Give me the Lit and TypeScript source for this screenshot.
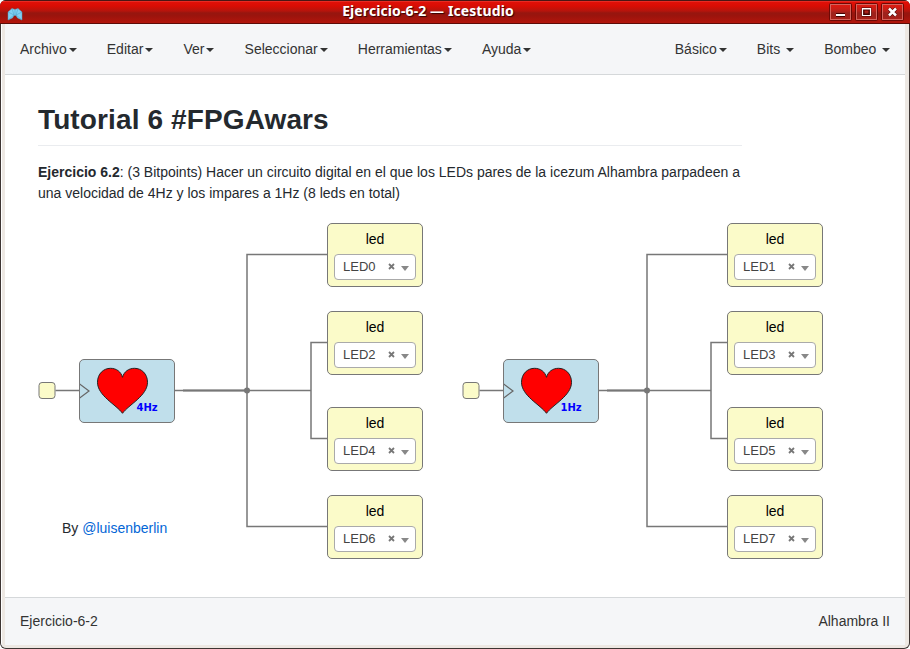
import { LitElement, html, css, svg } from "lit";
import { customElement, property } from "lit/decorators.js";

interface MenuItem { label: string; gap?: boolean }

const leftMenu: MenuItem[] = ["Archivo", "Editar", "Ver", "Seleccionar", "Herramientas", "Ayuda"].map((label) => ({ label }));
const rightMenu: MenuItem[] = [{ label: "Básico" }, { label: "Bits", gap: true }, { label: "Bombeo", gap: true }];

@customElement("title-bar")
class TitleBar extends LitElement {
  static styles = css`
    :host {
      display: flex; align-items: center; position: relative; height: 24px; box-sizing: border-box;
      border-top: 1px solid #4a1614; border-bottom: 1px solid #5c0c08; padding: 0 5px 0 7px;
      background: linear-gradient(#f0453c 0, #e01008 1px, #d80d04 5px, #b5140c 10px, #96160f 12px, #9c140d 15px, #b3150b 22px);
      font-family: "Noto Sans", sans-serif;
    }
    .logo { width: 16px; height: 14px; margin-top: 3px; }
    .title {
      flex: 1; text-align: center; color: #fff; font-weight: 700; font-size: 14px; line-height: 20px; letter-spacing: .1px;
      text-shadow: 1px 1px 1px #300; padding-left: 4px; white-space: nowrap; margin-top: -2px;
    }
    .dash { display: inline-block; width: 9px; height: 1.5px; margin: 0 1px; background: #fff; box-shadow: 1px 1px 1px #300; vertical-align: 4px; }
    .buttons { display: flex; gap: 3px; margin: -1px 1px 0 0; }
    .button { width: 23px; height: 18px; display: block; }
  `;
  private button(glyph: unknown) {
    return html`<svg class="button" viewBox="0 0 23 18">
      <rect x=".5" y=".5" width="22" height="17" rx="1" fill="none" stroke="#6d0905" />
      <rect x="1.5" y="1.5" width="20" height="15" fill="#fff" fill-opacity=".06" stroke="#d5645d" />
      ${glyph}
    </svg>`;
  }
  render() {
    return html`
      <svg class="logo" viewBox="0 0 16 14">
        <path d="M1 5L5 1.500l3 1 3-1L15 5v8l-4.500-2L9 8.500H7L5.500 11 1 13z" fill="#7fd0f3" stroke="#5a9dbb" stroke-width=".5" />
        <path d="M1 5l6 3L5 1.500M15 5L9 8l2-6.500M8 3v5M1 13l6-5M15 13L9 8" fill="none" stroke="#4a9fc4" stroke-width=".5" />
      </svg>
      <div class="title">Ejercicio-6-2 — Icestudio</div>
      <div class="buttons">
        ${this.button(svg`<path d="M7 10h9v4H7z" fill="#400"/><path d="M7 11h9v2H7z" fill="#fff"/>`)}
        ${this.button(svg`<path d="M8 6h7v6H8z" fill="none" stroke="#400" stroke-width="3"/><path d="M7.500 5.500h8v7h-8zM7.500 6h8" fill="none" stroke="#fff" stroke-width="1.200"/>`)}
        ${this.button(svg`<path d="M8 5.500l7 7M15 5.500l-7 7" stroke="#400" stroke-width="3.800"/><path d="M8 5.500l7 7M15 5.500l-7 7" stroke="#fff" stroke-width="2.600"/>`)}
      </div>`;
  }
}

@customElement("menu-bar")
class MenuBar extends LitElement {
  static styles = css`
    :host {
      display: flex; justify-content: space-between; height: 50px; background: #f5f6f8;
      border-bottom: 1px solid #d5d8da; color: #333; font-size: 14px; line-height: 20px;
    }
    .group { display: flex; }
    .item { display: flex; align-items: center; padding: 0 15px; white-space: pre; }
    .group:first-child .item { padding-right: 15.1px; }
    .group:last-child { margin-right: -.3px; }
    .caret { margin: 2px 0 0 2px; border: 4px solid transparent; border-top-color: #333; border-bottom: 0; }
    .gap { margin-left: 6px; }
  `;
  private item = (m: MenuItem) => html`<div class="item">${m.label}<span class="caret ${m.gap ? "gap" : ""}"></span></div>`;
  render() {
    return html`<div class="group">${leftMenu.map(this.item)}</div><div class="group">${rightMenu.map(this.item)}</div>`;
  }
}

@customElement("led-block")
class LedBlock extends LitElement {
  @property() name = "";
  static styles = css`
    :host {
      display: flex; flex-direction: column; box-sizing: border-box; width: 96px; height: 64px;
      border: 1px solid #777; border-radius: 5px; background: #fbfbc9; padding: 5px 6px 0; color: #000;
    }
    .label { text-align: center; font-size: 14px; line-height: 20px; height: 25px; }
    .select {
      display: flex; align-items: center; box-sizing: border-box; height: 26px; border: 1px solid #aaa;
      border-radius: 4px; background: #fff; padding: 0 6px 0 8px; font-size: 13px; color: #444;
    }
    .pin { flex: 1; margin-top: -2px; }
    .clear { width: 7px; height: 7px; margin: 0 6px 1px 0; }
    .arrow { border: 4px solid transparent; border-top: 5px solid #888; border-bottom: 0; margin-top: 3px; }
  `;
  render() {
    return html`<div class="label">led</div>
      <div class="select"><span class="pin">${this.name}</span>
        <svg class="clear" viewBox="0 0 7 7"><path d="M1 1l5 5M6 1l-5 5" stroke="#777" stroke-width="1.800" /></svg>
        <span class="arrow"></span></div>`;
  }
}

@customElement("heart-block")
class HeartBlock extends LitElement {
  @property() rate = "";
  static styles = css`
    :host { display: block; box-sizing: border-box; width: 96px; height: 64px; border: 1px solid #777; border-radius: 5px; background: #c0dfeb; }
    svg { display: block; width: 94px; height: 62px; }
    .rate { font: 700 10px "DejaVu Sans", sans-serif; fill: #00f; }
  `;
  render() {
    return html`<svg viewBox="0 0 94 62">
      <path d="M-.5 24l9.500 7-9.500 7" fill="none" stroke="#666" stroke-width="1.200" />
      <path transform="translate(-.5 -.2)" d="M43 53.500C37 45 18 36 18 22.500C18 14 24 8.500 31 8.500C37 8.500 41.500 12 43 17.500C44.500 12 49 8.500 55 8.500C62 8.500 68 14 68 22.500C68 36 49 45 43 53.500z" fill="#f00" stroke="#222" />
      <text class="rate" x="56.500" y="51" textLength="21">${this.rate}</text>
    </svg>`;
  }
}

const groups = [
  { x: 322, wire: 242, heart: 74, port: 33.5, rate: "4Hz", leds: ["LED0", "LED2", "LED4", "LED6"] },
  { x: 722, wire: 642, heart: 498, port: 457.5, rate: "1Hz", leds: ["LED1", "LED3", "LED5", "LED7"] },
];
const rows = [148, 236, 332, 420];

@customElement("circuit-canvas")
class CircuitCanvas extends LitElement {
  static styles = css`
    :host { display: block; position: relative; flex: 1; background: #fff; overflow: hidden; color: #24292e; font-size: 14px; }
    .note { padding: 22px 0 0 33px; width: 704px; line-height: 21px; }
    h1 { margin: 0 0 16px; font-size: 28px; letter-spacing: .12px; line-height: 35px; height: 49px; padding-top: 5px; box-sizing: border-box; border-bottom: 1px solid #eaecef; }
    p { margin: 0; white-space: nowrap; }
    .wires { position: absolute; left: 0; top: 0; width: 900px; height: 522px; }
    .node { position: absolute; left: var(--x); top: var(--y); }
    .author { line-height: 21px; }
    .link { color: #0366d6; }
  `;
  render() {
    return html`
      <div class="note"><h1>Tutorial 6 #FPGAwars</h1>
        <p><strong>Ejercicio 6.2</strong>: (3 Bitpoints) Hacer un circuito digital en el que los LEDs pares de la icezum Alhambra parpadeen a<br />una velocidad de 4Hz y los impares a 1Hz (8 leds en total)</p></div>
      <svg class="wires" viewBox="0 0 900 522">
        ${groups.map((g) => svg`
          <g fill="none" stroke="#777" stroke-width="1.500">
            <path d="M${g.port + 17} 315.600H${g.heart}M${g.heart + 96} 315.600H${g.wire + 64}"/>
            <path d="M${g.x} 179.600H${g.wire}V451.600H${g.x}M${g.x} 267.600H${g.wire + 64}V363.600H${g.x}"/>
            <path d="M${g.heart + 104} 315.500H${g.wire}" stroke-width="2.200"/>
          </g>
          <circle cx=${g.wire} cy="315.500" r="3" fill="#777"/>
          <rect x=${g.port + 0.5} y="307.500" width="16" height="16" rx="3" fill="#fbfbc9" stroke="#777"/>`)}
      </svg>
      ${groups.map((g) => html`
        <heart-block class="node" style="--x:${g.heart}px;--y:284px" .rate=${g.rate}></heart-block>
        ${g.leds.map((n, i) => html`<led-block class="node" style="--x:${g.x}px;--y:${rows[i]}px" .name=${n}></led-block>`)}`)}
      <div class="node author" style="--x:57px;--y:443px">By <span class="link">@luisenberlin</span></div>`;
  }
}

@customElement("app-root")
class AppRoot extends LitElement {
  static styles = css`
    :host { display: block; height: 649px; background: #fff; font-family: "Liberation Sans", Arial, sans-serif; }
    .window { display: flex; flex-direction: column; height: 649px; border-radius: 6px; overflow: hidden; background: #3d3533; }
    .frame {
      flex: 1; display: flex; flex-direction: column; margin: 0 1px 1px; padding: 0 4px 3px 3px;
      border-left: 1px solid #fff; border-radius: 0 0 5px 5px; background: #ede8e3;
    }
    .status {
      display: flex; justify-content: space-between; align-items: center; box-sizing: border-box; height: 48px;
      padding: 0 15px 2px; border-top: 1px solid #d5d8da; background: #f5f6f8; color: #333; font-size: 14px;
    }
  `;
  render() {
    return html`<div class="window"><title-bar></title-bar>
      <div class="frame"><menu-bar></menu-bar><circuit-canvas></circuit-canvas>
        <div class="status"><span>Ejercicio-6-2</span><span>Alhambra II</span></div></div></div>`;
  }
}
